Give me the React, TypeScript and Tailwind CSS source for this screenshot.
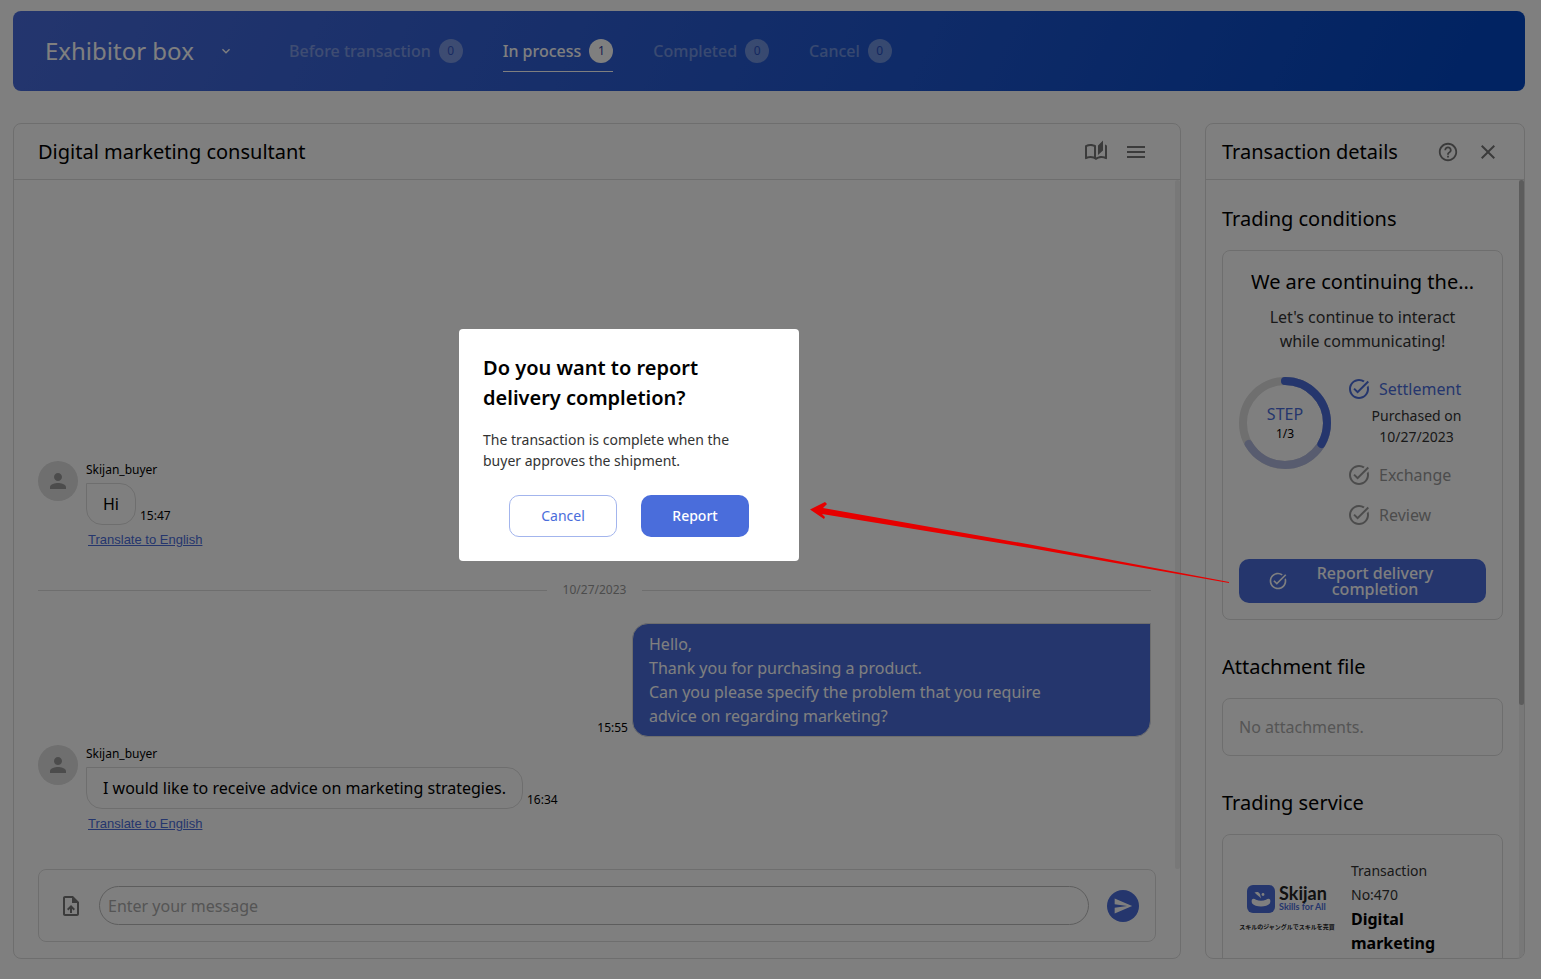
import { useState } from 'react';
import {
  MdClose,
  MdExpandMore,
  MdHelpOutline,
  MdMenu,
  MdOutlineAutoStories,
  MdOutlineUploadFile,
  MdPerson,
  MdSend,
  MdTaskAlt,
} from 'react-icons/md';

const tabs = [
  { label: 'Before transaction', count: 0 },
  { label: 'In process', count: 1 },
  { label: 'Completed', count: 0 },
  { label: 'Cancel', count: 0 },
];

function Header() {
  const [active, setActive] = useState('In process');

  return (
    <header className="flex h-20 items-center rounded-lg bg-linear-[115deg,#486bdc_0%,#1e56d0_60%,#0347c4_95%] px-8 text-white">
      <button className="flex w-[244px] shrink-0 items-center gap-6 text-2xl">
        Exhibitor box
        <MdExpandMore className="size-4" />
      </button>
      <nav className="flex gap-10">
        {tabs.map((tab) => (
          <button
            key={tab.label}
            onClick={() => setActive(tab.label)}
            className={
              tab.label === active
                ? 'flex h-[42px] items-center gap-2 border-b border-white font-medium'
                : 'flex h-[42px] items-center gap-2 border-b border-transparent font-medium opacity-35'
            }
          >
            {tab.label}
            <span className="flex size-6 items-center justify-center rounded-full bg-white text-xs font-normal text-[#3040a0]">
              {tab.count}
            </span>
          </button>
        ))}
      </nav>
    </header>
  );
}

function BuyerMessage({ text, time }: { text: string; time: string }) {
  return (
    <div className="flex gap-2">
      <div className="flex size-10 shrink-0 items-center justify-center rounded-full bg-[#dedede] text-[#999999]">
        <MdPerson className="size-6" />
      </div>
      <div>
        <p className="text-xs leading-[18px]">Skijan_buyer</p>
        <div className="mt-1 flex items-end gap-1">
          <p className="rounded-2xl rounded-tl-none border border-[#dddddd] px-4 py-2">{text}</p>
          <span className="text-xs leading-[18px]">{time}</span>
        </div>
        <a
          href="#translate"
          className="ml-0.5 mt-[5px] block h-5 font-['Liberation_Sans',sans-serif] text-[13px] leading-5 text-[#4a6ddb] underline"
        >
          Translate to English
        </a>
      </div>
    </div>
  );
}

function ChatPanel() {
  return (
    <main className="flex min-w-0 flex-1 flex-col overflow-hidden rounded-lg border border-[#dddddd]">
      <div className="flex h-14 shrink-0 items-center border-b border-[#dddddd] pl-6 pr-8">
        <h1 className="flex-1 text-xl">Digital marketing consultant</h1>
        <button aria-label="Guide" className="mr-4 text-[#777777]">
          <MdOutlineAutoStories className="size-6" />
        </button>
        <button aria-label="Menu" className="text-[#777777]">
          <MdMenu className="size-6" />
        </button>
      </div>

      <div className="flex min-h-0 flex-1">
        <div className="flex flex-1 flex-col justify-end overflow-hidden px-6 pb-[35px]">
          <BuyerMessage text="Hi" time="15:47" />
          <div className="mt-[31px] flex h-[18px] items-center gap-4 text-xs text-[#999999]">
            <hr className="flex-1 border-[#dddddd]" />
            10/27/2023
            <hr className="flex-1 border-[#dddddd]" />
          </div>
          <div className="mb-2 mt-6 flex items-end justify-end gap-1">
            <span className="text-xs leading-[18px]">15:55</span>
            <p className="w-[519px] whitespace-pre-line rounded-2xl rounded-tr-none border border-[#dddddd] bg-[#4a6ddb] px-4 py-2 text-white">
              {'Hello,\nThank you for purchasing a product.\nCan you please specify the problem that you require\nadvice on regarding marketing?'}
            </p>
          </div>
          <BuyerMessage text="I would like to receive advice on marketing strategies." time="16:34" />
        </div>
        <div className="w-[5px] rounded-full bg-[#f0f0f0]" />
      </div>

      <form
        onSubmit={(e) => e.preventDefault()}
        className="mx-6 mb-4 flex shrink-0 items-center gap-3 rounded-lg border border-[#dddddd] p-4"
      >
        <button type="button" aria-label="Upload file" className="flex size-8 items-center justify-center text-[#777777]">
          <MdOutlineUploadFile className="size-6" />
        </button>
        <input
          aria-label="Message"
          placeholder="Enter your message"
          className="h-[39px] min-w-0 flex-1 rounded-full border border-[#bbbbbb] px-2 placeholder:text-[#aaaaaa]"
        />
        <button aria-label="Send" className="ml-1.5 flex size-8 items-center justify-center rounded-full bg-[#4a6ddb] text-white">
          <MdSend className="size-5" />
        </button>
      </form>
    </main>
  );
}

function StepRing() {
  return (
    <div className="relative size-[92px] shrink-0">
      <svg viewBox="0 0 92 92" className="size-full -rotate-90" fill="none" strokeWidth="8" strokeLinecap="round">
        <circle cx="46" cy="46" r="42" stroke="#dedede" />
        <circle cx="46" cy="46" r="42" stroke="#b0b8de" pathLength="360" strokeDasharray="240 120" />
        <circle cx="46" cy="46" r="42" stroke="#4a6ddb" pathLength="360" strokeDasharray="120 240" />
      </svg>
      <div className="absolute inset-0 flex flex-col items-center justify-center pt-0.5">
        <span className="leading-5 text-[#4a6ddb]">STEP</span>
        <span className="text-xs leading-5">1/3</span>
      </div>
    </div>
  );
}

function SkijanLogo() {
  return (
    <div className="flex size-24 shrink-0 flex-col items-center justify-center rounded-lg bg-white pt-1">
      <div className="flex items-center gap-1">
        <svg viewBox="0 0 28 28" className="size-7">
          <rect width="28" height="28" rx="6" fill="#4a6ddb" />
          <path d="M5 14.5c1-1.4 2.6-.6 4 .2 3 1.5 7 1.5 10 0 1.4-.8 3-1.6 4-.2.6 1 .4 3-.2 4-1.6 2-5 3-8.800 3s-7.2-1-8.800-3c-.6-1-.8-3-.2-4z" fill="#fff" />
          <path d="M7.5 7.5c2-1 4.5-.8 5.500 1.500l1 4.500c-1.500-2.500-4-3-6.500-6z" fill="#fff" />
          <circle cx="16" cy="9.5" r="1.4" fill="#fff" />
        </svg>
        <div className="font-['Lato',sans-serif]">
          <p className="text-lg font-bold leading-4 text-[#222222]">Skijan</p>
          <p className="text-[9px] font-bold leading-3 text-[#4a6ddb]">Skills for All</p>
        </div>
      </div>
      <p className="mt-2 whitespace-nowrap font-['Noto_Sans_CJK_JP',sans-serif] text-[6px] font-bold leading-3 text-[#222222]">
        スキルのジャングルでスキルを売買
      </p>
    </div>
  );
}

function DetailsPanel() {
  return (
    <aside className="flex w-80 shrink-0 flex-col overflow-hidden rounded-lg border border-[#dddddd]">
      <div className="flex h-14 shrink-0 items-center border-b border-[#dddddd] pl-4 pr-6">
        <h2 className="flex-1 text-xl">Transaction details</h2>
        <button aria-label="Help" className="mr-4 flex size-6 items-center justify-center text-[#777777]">
          <MdHelpOutline className="size-[22px]" />
        </button>
        <button aria-label="Close" className="text-[#777777]">
          <MdClose className="size-6" />
        </button>
      </div>

      <div className="flex min-h-0 flex-1">
        <div className="min-w-0 flex-1 overflow-hidden px-4 pt-6">
          <h3 className="text-xl leading-[30px]">Trading conditions</h3>
          <section className="mt-4 rounded-lg border border-[#dddddd] p-4">
            <h4 className="text-center text-xl leading-[30px]">We are continuing the…</h4>
            <p className="mt-2 text-center text-[#333333]">
              Let's continue to interact
              <br />
              while communicating!
            </p>
            <div className="mt-6 flex gap-4">
              <StepRing />
              <div className="flex-1">
                <p className="flex items-center gap-2 text-[#4a6ddb]">
                  <MdTaskAlt className="size-6" />
                  Settlement
                </p>
                <p className="mt-1 text-center text-sm leading-[21px] text-[#333333]">
                  Purchased on
                  <br />
                  10/27/2023
                </p>
                <p className="mt-4 flex items-center gap-2 text-[#999999]">
                  <MdTaskAlt className="size-6" />
                  Exchange
                </p>
                <p className="mt-4 flex items-center gap-2 text-[#999999]">
                  <MdTaskAlt className="size-6" />
                  Review
                </p>
              </div>
            </div>
            <button className="mt-8 flex h-11 w-full items-center rounded-[10px] bg-[#4a6ddb] pl-[29px] pr-6 font-medium leading-4 text-white">
              <MdTaskAlt className="size-5 shrink-0" />
              <span className="flex-1 px-6">Report delivery completion</span>
            </button>
          </section>

          <h3 className="mt-8 text-xl leading-[30px]">Attachment file</h3>
          <p className="mt-4 rounded-lg border border-[#dddddd] p-4 text-[#aaaaaa]">No attachments.</p>

          <h3 className="mt-8 text-xl leading-[30px]">Trading service</h3>
          <section className="mt-4 flex gap-4 rounded-lg border border-[#dddddd] px-4 py-6">
            <SkijanLogo />
            <div>
              <p className="text-sm leading-6 text-[#333333]">
                Transaction
                <br />
                No:470
              </p>
              <p className="font-bold">Digital marketing</p>
            </div>
          </section>
        </div>
        <div className="w-[5px] bg-[#f0f0f0]">
          <div className="h-[525px] rounded-full bg-[#b8b8b8]" />
        </div>
      </div>
    </aside>
  );
}

function ReportDialog() {
  return (
    <div className="fixed inset-0 flex items-center justify-center bg-black/50 pb-[89px] pr-[283px]">
      <div role="dialog" aria-labelledby="report-title" className="w-[340px] rounded-sm bg-white p-6">
        <h2 id="report-title" className="text-xl font-semibold leading-[30px]">
          Do you want to report
          <br />
          delivery completion?
        </h2>
        <p className="mt-4 text-sm leading-[21px] text-[#333333]">
          The transaction is complete when the
          <br />
          buyer approves the shipment.
        </p>
        <div className="mt-6 flex justify-center gap-6 text-sm">
          <button className="h-[42px] w-[108px] rounded-[10px] border border-[#a3b5ed] text-[#4a6ddb]">Cancel</button>
          <button className="h-[42px] w-[108px] rounded-[10px] bg-[#4a6ddb] font-medium text-white">Report</button>
        </div>
      </div>
      <svg viewBox="0 0 420 82" className="absolute left-[810px] top-[501px] h-[82px] w-[420px]" fill="#e60000">
        <path d="M0 8.5 L15 1 L17 3 L13 7 L220 43.5 L419 81 L419 82 L220 47 L12 13 L15 16 L14 18 Z" />
      </svg>
    </div>
  );
}

export default function App() {
  return (
    <div className="min-h-screen bg-white pl-[13px] pr-4 pt-[11px] font-['Noto_Sans',sans-serif] text-base text-black">
      <Header />
      <div className="mt-8 flex h-[calc(100vh-143px)] gap-6">
        <ChatPanel />
        <DetailsPanel />
      </div>
      <ReportDialog />
    </div>
  );
}
